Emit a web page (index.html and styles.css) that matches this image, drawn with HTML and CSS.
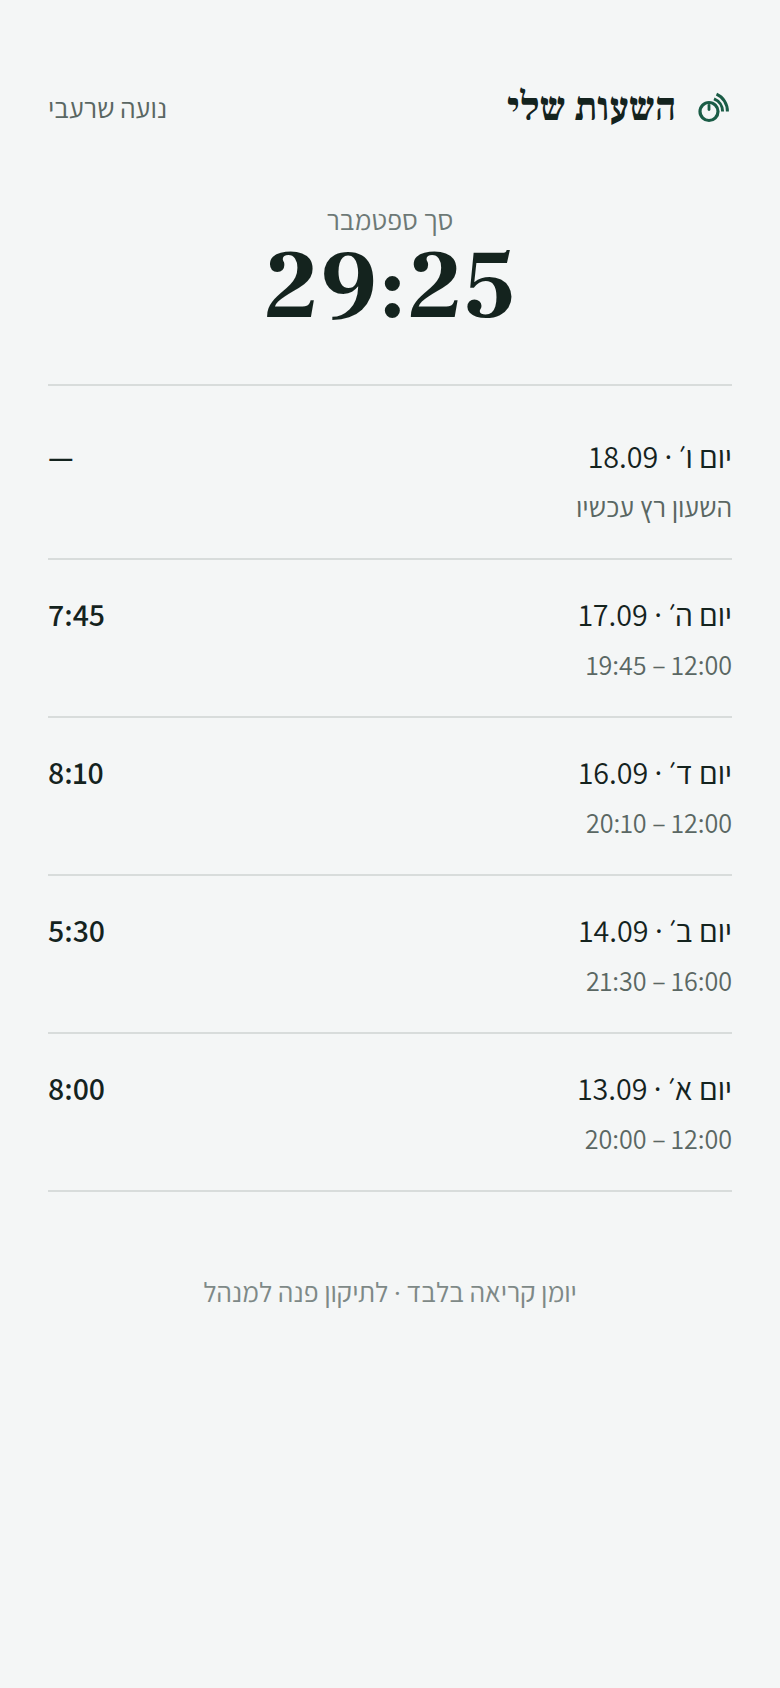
FILE: index.html
```html
<!DOCTYPE html>
<html lang="he" dir="rtl">
<head>
<meta charset="utf-8">
<title>השעות שלי</title>
<link rel="stylesheet" href="styles.css">
</head>
<body>
<main class="page">
  <header class="top">
    <div class="brand">
      <svg class="logo" viewBox="0 0 36 36" width="36" height="36" aria-hidden="true">
        <circle cx="13" cy="21.5" r="9" fill="none" stroke="#1a5c46" stroke-width="3.2"/>
        <path d="M13 15.5v4" fill="none" stroke="#1a5c46" stroke-width="2.8" stroke-linecap="round"/>
        <path d="M18 8.85a13.6 13.6 0 0 1 8.6 12.65M20.5 4.2a18.4 18.4 0 0 1 10.9 17.3" fill="none" stroke="#1a5c46" stroke-width="3"/>
      </svg>
      <h1 class="title">השעות שלי</h1>
    </div>
    <div class="user">נועה שרעבי</div>
  </header>
  <section class="total">
    <div class="total-label">סך ספטמבר</div>
    <div class="total-value">29:25</div>
  </section>
  <ul class="days">
    <li class="day"><div class="day-top"><span class="day-name">יום ו׳ · 18.09</span><span class="day-hours">—</span></div><div class="day-sub">השעון רץ עכשיו</div></li>
    <li class="day"><div class="day-top"><span class="day-name">יום ה׳ · 17.09</span><span class="day-hours">7:45</span></div><div class="day-sub">12:00 – 19:45</div></li>
    <li class="day"><div class="day-top"><span class="day-name">יום ד׳ · 16.09</span><span class="day-hours">8:10</span></div><div class="day-sub">12:00 – 20:10</div></li>
    <li class="day"><div class="day-top"><span class="day-name">יום ב׳ · 14.09</span><span class="day-hours">5:30</span></div><div class="day-sub">16:00 – 21:30</div></li>
    <li class="day"><div class="day-top"><span class="day-name">יום א׳ · 13.09</span><span class="day-hours">8:00</span></div><div class="day-sub">12:00 – 20:00</div></li>
  </ul>
  <footer class="foot">יומן קריאה בלבד · לתיקון פנה למנהל</footer>
</main>
</body>
</html>
```
FILE: styles.css
```css
* { box-sizing: border-box; }
html, body { margin: 0; padding: 0; }
body {
  background: #f4f6f6;
  color: #14231e;
  font-family: "Assistant", sans-serif;
  min-height: 1688px;
}
.page { padding: 80px 48px 48px; }
.top { display: flex; justify-content: space-between; align-items: center; height: 56px; }
.brand { display: flex; align-items: center; gap: 20px; }
.logo { display: block; }
.title { margin: 0; font-family: "Frank Ruhl Libre", serif; font-size: 40px; font-weight: 700; line-height: 1; }
.user { font-size: 28px; line-height: 34px; color: #5a6763; }
.total { text-align: center; padding: 68px 0 46px; }
.total-label { font-size: 28px; color: #6d7976; line-height: 32px; }
.total-value { font-family: "Frank Ruhl Libre", serif; font-weight: 700; font-size: 98px; line-height: 102px; }
.days { list-style: none; margin: 0; padding: 16px 0 0; border-top: 2px solid #d8dcdb; }
.day { border-bottom: 2px solid #d8dcdb; padding: 30px 0 24px; }
.day-top { display: flex; justify-content: space-between; font-size: 32px; line-height: 48px; }
.day-hours { font-weight: 600; }
.day-sub { font-size: 28px; color: #5a6763; line-height: 54px; }
.foot { text-align: center; color: #7e8987; font-size: 28px; line-height: 40px; margin-top: 80px; }
```
